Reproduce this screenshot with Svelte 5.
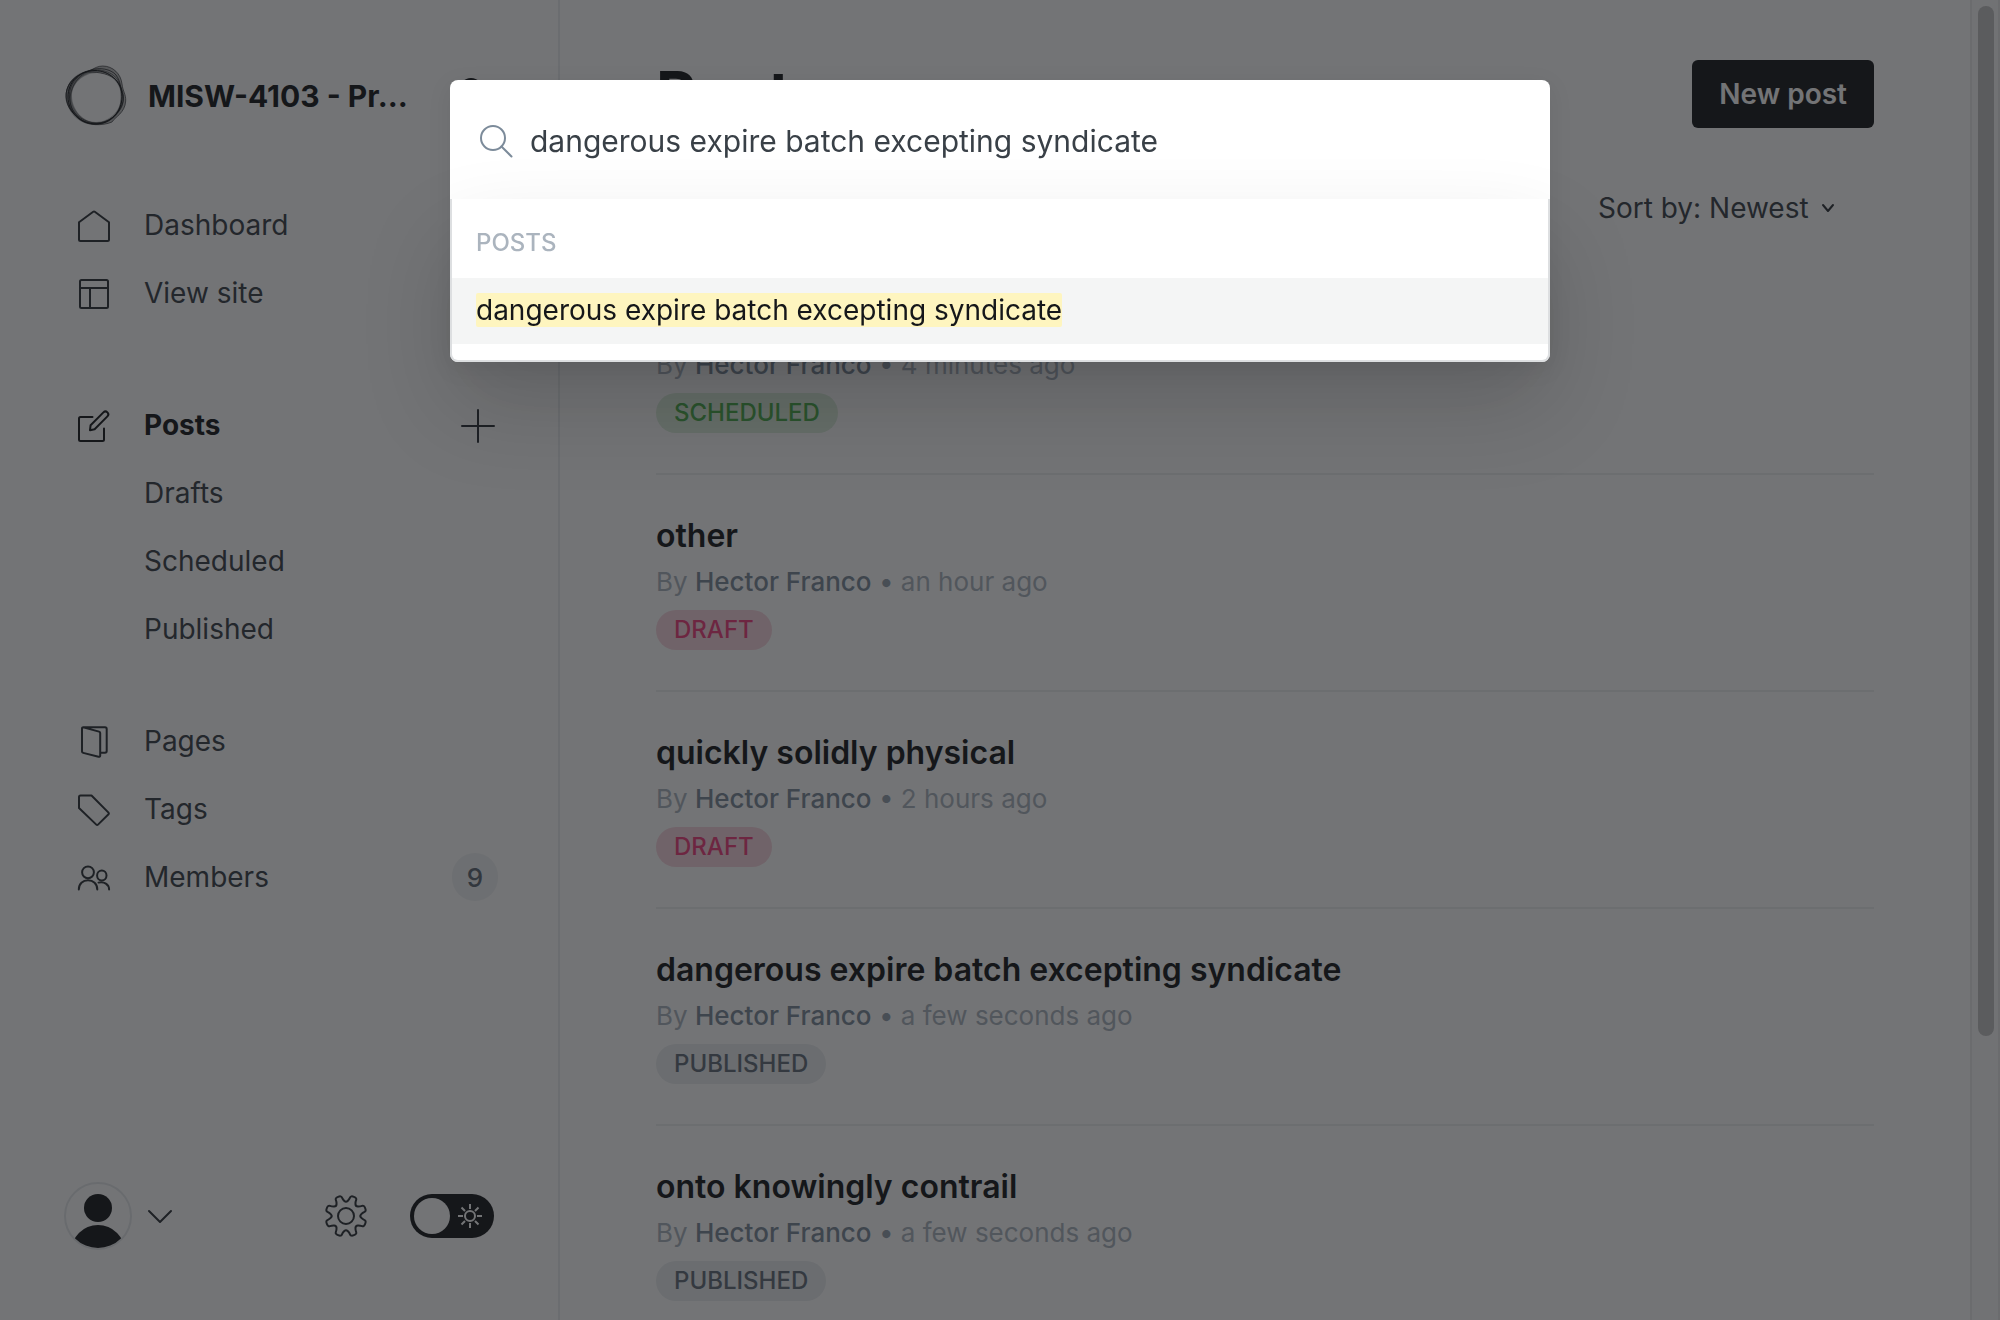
<script>
  const posts = [
    { title: '', when: '4 minutes ago', status: 'scheduled' },
    { title: 'other', when: 'an hour ago', status: 'draft' },
    { title: 'quickly solidly physical', when: '2 hours ago', status: 'draft' },
    { title: 'dangerous expire batch excepting syndicate', when: 'a few seconds ago', status: 'published' },
    { title: 'onto knowingly contrail', when: 'a few seconds ago', status: 'published' },
  ];
  const views = ['Drafts', 'Scheduled', 'Published'];
  let query = $state('dangerous expire batch excepting syndicate');
  let night = $state(false);

  // Outline of an eight-lobed cog, smoothed through segment midpoints
  function cog(cx, cy) {
    const pts = [];
    for (let i = 0; i < 8; i++) {
      const a = i * 45 + 22.5;
      for (const [d, r] of [[-11, 17], [-9, 21], [9, 21], [11, 17], [22.5, 13.5]]) {
        const t = ((a + d) * Math.PI) / 180;
        pts.push([cx + r * Math.sin(t), cy - r * Math.cos(t)]);
      }
    }
    const mid = (p, q) => `${((p[0] + q[0]) / 2).toFixed(2)} ${((p[1] + q[1]) / 2).toFixed(2)}`;
    let d = `M${mid(pts[pts.length - 1], pts[0])}`;
    pts.forEach((p, i) => {
      d += `Q${p[0].toFixed(2)} ${p[1].toFixed(2)} ${mid(p, pts[(i + 1) % pts.length])}`;
    });
    return d + 'z';
  }
</script>

<div class="app">
  <aside class="sidebar">
    <header class="site">
      <svg class="logo" viewBox="0 0 62 62" aria-hidden="true">
        <g fill="#15171a" fill-opacity=".3" fill-rule="evenodd">
          <path d="M37.700 1C48 1 56 9 57 19c1 8 4 10 3.700 17C60 48 50 52 47 57 38 61 22 61 14 54 4 46-1 34 2 24 6 10 20 8 26 5c4-2 7-4 11.700-4zM32 7C18 7 7 18 7 31s11 27 25 27 25-13 25-27S46 7 32 7z" />
          <path d="M29 5C13 5 1 16 1 31s12 29 29 29 28-13 28-28S45 5 29 5zM32 8C18 8 6.500 19 6.500 32S18 57 31 57s25-11 25-25S46 8 32 8z" />
        </g>
        <g fill="none" stroke="#15171a" stroke-width="1">
          <path stroke-opacity=".6" d="M37.700 1C48 1 56 9 57 19c1 8 4 10 3.700 17C60 48 50 52 47 57 38 61 22 61 14 54 4 46-1 34 2 24 6 10 20 8 26 5c4-2 7-4 11.700-4z" />
          <path stroke-opacity=".7" d="M26 5c8-3 20-1 25 5 5 7 4 12 7 20 2 9-5 18-11 23-8 7-22 8-31 2C6 48 0 39 1 29 2 17 14 8 26 5z" />
          <path d="M30 5.500c14 0 27 11 27 26S46 59 31 59 3 47 3 32 14 5.500 30 5.500z" />
          <path stroke-opacity=".6" d="M24 7c10 0 22 2 28 9s8 17 5 25-14 17-25 17S9 51 6 41 4 21 11 14 19 7 24 7z" />
          <path stroke-opacity=".5" d="M35 5c12 2 20 8 21 20s-1 22-9 28-24 8-33 0S3 35 7 24 22 3 35 5z" />
        </g>
      </svg>
      <strong class="site-name">MISW-4103 - Pr…</strong>
      <button class="icon-button find" aria-label="Search site">
        <svg width="32" height="32" viewBox="0 0 32 32"><circle cx="13" cy="10" r="10" /><path d="M20 18l8 8" /></svg>
      </button>
    </header>

    <nav>
      <div class="group">
        <a class="link" href="#dashboard">
          <svg class="icon" viewBox="0 0 34 34"><path d="M2 14.2 16.2 3.8a1.4 1.4 0 0 1 1.6 0L32 14.2V31.5a1.5 1.5 0 0 1-1.5 1.5h-27A1.5 1.5 0 0 1 2 31.5z" /></svg>
          Dashboard
        </a>
        <a class="link" href="#site">
          <svg class="icon" viewBox="0 0 34 34"><rect x="3" y="4" width="28" height="28" rx="1.5" /><path d="M3 12h28M13 12v20" /></svg>
          View site
        </a>
      </div>
      <div class="group posts-group">
        <div class="link-row">
          <a class="link active" href="#posts">
            <svg class="icon" viewBox="0 0 34 34"><path d="M15.500 9H3.500A1.500 1.500 0 0 0 2 10.500v21A1.500 1.500 0 0 0 3.500 33h22a1.500 1.500 0 0 0 1.500-1.500V20.500" /><path d="M13 22.200l.6-5L26.400 4.400a2.800 2.800 0 0 1 4 4L17.600 21.200z" /></svg>
            Posts
          </a>
          <button class="icon-button" aria-label="Add post">
            <svg class="icon" viewBox="0 0 34 34"><path d="M17 2v32M1 18h32" /></svg>
          </button>
        </div>
        {#each views as view}
          <a class="link sub" href="#{view.toLowerCase()}">{view}</a>
        {/each}
      </div>
      <div class="group">
        <a class="link" href="#pages">
          <svg class="icon" viewBox="0 0 34 34"><path d="M6.300 3.200 22 7.600a1.600 1.600 0 0 1 1.200 1.500V31.600a1.300 1.300 0 0 1-1.700 1.200L6.200 28.900A1.600 1.600 0 0 1 5 27.400V4.400A1.200 1.200 0 0 1 6.300 3.200H28a1.700 1.700 0 0 1 1.700 1.700V27a1.700 1.700 0 0 1-1.700 1.700H23.200" /></svg>
          Pages
        </a>
        <a class="link" href="#tags">
          <svg class="icon" viewBox="0 0 34 34"><path d="M3.500 3.500h11L31.500 20.600a1.200 1.200 0 0 1 0 1.700L21 32.600a1.200 1.200 0 0 1-1.700 0L2 16V5a1.500 1.500 0 0 1 1.500-1.500z" /></svg>
          Tags
        </a>
        <div class="link-row">
          <a class="link" href="#members">
            <svg class="icon" viewBox="0 0 34 34"><circle cx="11" cy="12.300" r="5.900" /><path d="M1.800 29.500c0-5.600 4-9.300 9.200-9.300s9.300 3.700 9.300 9.300" /><ellipse cx="24.800" cy="15.500" rx="4.700" ry="5" /><path d="M21.500 22.600c5.500-1.400 10.600 1.700 10.600 6.900" /></svg>
            Members
          </a>
          <span class="count">9</span>
        </div>
      </div>
    </nav>

    <footer class="account">
      <button class="icon-button user" aria-label="Account menu">
        <svg width="68" height="68" viewBox="0 0 68 68">
          <clipPath id="face"><circle cx="34" cy="34" r="32" /></clipPath>
          <circle cx="34" cy="34" r="33" fill="none" stroke="#e6e9ec" stroke-width="2" />
          <g fill="#15171a" clip-path="url(#face)"><circle cx="34" cy="26" r="14" /><circle cx="34" cy="70" r="27" /></g>
        </svg>
        <svg width="24" height="14" viewBox="0 0 24 14"><path class="line" d="M1 2l11 11L23 2" /></svg>
      </button>
      <button class="icon-button settings" aria-label="Settings">
        <svg width="42" height="42" viewBox="0 0 42 42"><path class="line" d={cog(21, 21)} /><circle class="line" cx="21" cy="21" r="8" /></svg>
      </button>
      <label class="toggle">
        <input type="checkbox" aria-label="Night shift" bind:checked={night} />
        <span class="knob"></span>
        <svg width="24" height="24" viewBox="0 0 24 24"><circle cx="12" cy="12" r="5" /><path d="M12 0v5M12 19v5M0 12h5M19 12h5M3.500 3.500l3.500 3.500M17 17l3.500 3.500M3.500 20.500l3.500-3.500M17 7l3.500-3.500" /></svg>
      </label>
    </footer>
  </aside>

  <main>
    <header class="heading">
      <h1>Posts</h1>
      <button class="primary">New post</button>
    </header>
    <div class="filters">
      <select aria-label="Sort order"><option>Sort by: Newest</option></select>
      <svg width="12" height="8" viewBox="0 0 12 8"><path class="line" d="M1 1l5 6 5-6" /></svg>
    </div>
    <ol class="list">
      {#each posts as post}
        <li class="post">
          <h3>{post.title}</h3>
          <p class="meta">By <b>Hector Franco</b> <span class="dot">•</span> {post.when}</p>
          <span class="status {post.status}">{post.status}</span>
        </li>
      {/each}
    </ol>
  </main>

  <div class="scrollbar" aria-hidden="true"><div class="thumb"></div></div>
</div>

<div class="backdrop">
  <div class="modal" role="dialog" aria-label="Search">
    <label class="search">
      <svg width="32" height="32" viewBox="0 0 32 32"><circle cx="13" cy="13" r="12" /><path d="M21.500 21.500 31.500 31.500" /></svg>
      <input type="text" aria-label="Search posts" bind:value={query} />
    </label>
    <div class="results">
      <h2>POSTS</h2>
      <a class="result" href="#result"><mark>dangerous expire batch excepting syndicate</mark></a>
    </div>
  </div>
</div>

<style>
  :global(body) {
    margin: 0;
    background: #fff;
  }
  .app,
  .backdrop {
    font-family: Inter, 'Liberation Sans', sans-serif;
    font-size: 28px;
    color: #15171a;
  }
  .app {
    display: grid;
    grid-template-columns: 560px minmax(0, 1fr) 30px;
    grid-template-rows: minmax(0, 1fr);
    height: 100vh;
    overflow: hidden;
  }
  .app *,
  .backdrop * {
    box-sizing: border-box;
  }
  h1, h2, h3, p, ol {
    margin: 0;
    padding: 0;
  }
  a {
    color: inherit;
    text-decoration: none;
  }
  svg {
    flex: none;
    display: block;
    overflow: visible;
  }
  button, select, input {
    font: inherit;
    color: inherit;
    border: 0;
    padding: 0;
    background: none;
    outline: 0;
  }
  .line,
  .icon {
    fill: none;
    stroke: #2b3036;
    stroke-width: 2;
    stroke-linecap: round;
    stroke-linejoin: round;
  }
  .icon {
    width: 34px;
    height: 34px;
  }

  .sidebar {
    display: flex;
    flex-direction: column;
    border-right: 2px solid #eaedef;
  }
  .site {
    display: flex;
    align-items: center;
    padding: 65px 68px 64px 65px;
  }
  .logo {
    width: 62px;
    height: 62px;
    margin-right: 21px;
  }
  .site-name {
    flex: 1;
    font-size: 30px;
    font-weight: 700;
    white-space: nowrap;
  }
  .find svg {
    fill: none;
    stroke: #15171a;
    stroke-width: 4;
  }
  nav {
    display: flex;
    flex-direction: column;
  }
  .posts-group {
    margin: 64px 0 44px;
  }
  .link {
    flex: 1;
    display: flex;
    align-items: center;
    gap: 33px;
    height: 68px;
    padding-left: 77px;
    color: #394047;
  }
  .link.active {
    font-weight: 700;
    color: #15171a;
  }
  .active .icon {
    stroke: #15171a;
  }
  .link.sub {
    padding-left: 144px;
  }
  .link-row {
    display: flex;
    align-items: center;
    padding-right: 63px;
  }
  .count {
    display: grid;
    place-items: center;
    width: 46px;
    height: 48px;
    margin-right: -3px;
    border-radius: 24px;
    background: #f1f3f4;
    color: #5d6873;
    font-size: 26px;
    font-weight: 500;
  }
  .account {
    display: flex;
    align-items: center;
    margin-top: auto;
    padding: 0 64px 70px;
  }
  .user {
    display: flex;
    align-items: center;
    gap: 16px;
  }
  .settings {
    margin: 0 43px 0 auto;
  }
  .toggle {
    display: flex;
    align-items: center;
    justify-content: space-between;
    width: 84px;
    height: 44px;
    padding: 0 12px 0 4px;
    border-radius: 22px;
    background: #15171a;
  }
  .toggle input {
    appearance: none;
    width: 0;
    height: 0;
    margin: 0;
  }
  .knob {
    width: 36px;
    height: 36px;
    margin-right: auto;
    border-radius: 50%;
    background: #fff;
  }
  .toggle svg {
    fill: none;
    stroke: #fff;
    stroke-width: 2;
  }

  main {
    min-width: 0;
    padding: 60px 96px 0;
  }
  .heading {
    display: flex;
    align-items: center;
    justify-content: space-between;
    height: 68px;
  }
  h1 {
    font-size: 62px;
    line-height: 66px;
    font-weight: 700;
  }
  .primary {
    height: 68px;
    padding: 0 27px;
    border-radius: 6px;
    background: #15171a;
    color: #fff;
    font-weight: 600;
  }
  .filters {
    display: flex;
    align-items: center;
    justify-content: flex-end;
    gap: 13px;
    height: 70px;
    margin: 45px 0 15px;
    padding-right: 40px;
    color: #394047;
  }
  select {
    appearance: none;
  }
  .list {
    list-style: none;
  }
  .post {
    display: flex;
    flex-direction: column;
    align-items: flex-start;
    padding: 40px 0;
    border-bottom: 2px solid #edeff1;
  }
  h3 {
    height: 42px;
    font-size: 32px;
    line-height: 42px;
    font-weight: 600;
  }
  .meta {
    margin: 7px 0 10px;
    font-size: 26px;
    line-height: 36px;
    color: #abb4be;
  }
  .meta b {
    font-weight: 500;
    color: #7c8b9a;
  }
  .dot {
    color: #95a1ad;
  }
  .status {
    height: 40px;
    padding: 0 18px;
    border-radius: 20px;
    font-size: 24px;
    line-height: 40px;
    font-weight: 500;
    text-transform: uppercase;
  }
  .scheduled {
    background: #dcefdc;
    color: #4aad4a;
  }
  .draft {
    background: #f8d5de;
    color: #f03d7c;
  }
  .published {
    background: #ebeef0;
    color: #626d79;
  }
  .scrollbar {
    display: flex;
    padding: 6px 4px 0 6px;
    border: 2px solid #ebebeb;
    border-width: 0 2px;
    background: #fafafa;
  }
  .thumb {
    width: 16px;
    height: 78vh;
    border-radius: 8px;
    background: #c2c2c2;
  }

  .backdrop {
    position: fixed;
    inset: 0;
    display: flex;
    justify-content: center;
    align-items: flex-start;
    padding-top: 80px;
    background: rgba(21, 23, 26, 0.6);
  }
  .modal {
    width: 1100px;
    max-width: 90%;
    border-radius: 8px;
    background: #fff;
    box-shadow: 0 6px 24px rgba(0, 0, 0, 0.08);
  }
  .search {
    display: flex;
    align-items: center;
    gap: 18px;
    padding: 35px 30px 32px;
  }
  .search svg {
    fill: none;
    stroke: #7c8b9a;
    stroke-width: 2;
    stroke-linecap: round;
  }
  .search input {
    flex: 1;
    height: 52px;
    font-size: 30px;
    color: #394047;
  }
  .results {
    padding-bottom: 16px;
    border: 2px solid #dddfe1;
    border-top: 0;
    border-radius: 0 0 8px 8px;
    background: #fff;
    box-shadow: 0 44px 90px rgba(0, 0, 0, 0.16);
  }
  h2 {
    padding: 27px 24px 18px;
    font-size: 24px;
    line-height: 34px;
    font-weight: 500;
    color: #abb4be;
  }
  .result {
    display: block;
    padding: 15px 24px 17px;
    line-height: 34px;
    background: #f4f5f5;
  }
  mark {
    border-radius: 2px;
    background: #fef5bf;
    color: #15171a;
  }
</style>
